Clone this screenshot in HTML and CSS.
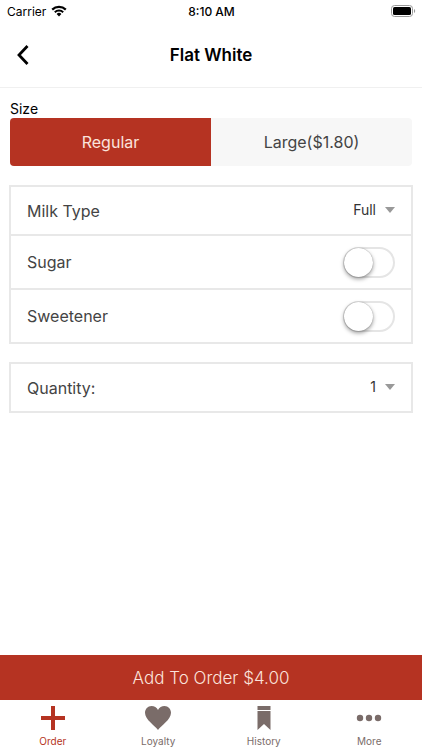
FILE: index.html
```html
<!DOCTYPE html>
<html lang="en">
<head>
  <meta charset="UTF-8">
  <meta name="viewport" content="width=device-width, initial-scale=1.0">
  <title>Flat White</title>
  <link rel="stylesheet" href="styles.css">
</head>
<body>

<div class="status-bar">
  <div class="carrier">
    <span>Carrier</span>
    <svg width="16" height="12" viewBox="0 0 16 12" aria-hidden="true">
      <path d="M1.2 4.6a9.8 9.8 0 0 1 13.6 0" fill="none" stroke="#000" stroke-width="2.2"/>
      <path d="M3.8 7.3a6.1 6.1 0 0 1 8.4 0" fill="none" stroke="#000" stroke-width="2"/>
      <path d="M8 11.4 5.6 9a3.5 3.5 0 0 1 4.8 0z"/>
    </svg>
  </div>
  <span class="time">8:10 AM</span>
  <div class="battery">
    <svg width="25" height="12" viewBox="0 0 25 12" aria-hidden="true">
      <rect x="0.5" y="0.5" width="21" height="11" rx="3" fill="#fff" stroke="#999"/>
      <rect x="2" y="2" width="18" height="8" rx="1.6"/>
      <path d="M23 4c1.6.6 1.6 3.4 0 4z" fill="#999"/>
    </svg>
  </div>
</div>

<header class="header">
  <button class="back" type="button" aria-label="Back">
    <svg width="14" height="20" viewBox="0 0 14 20" aria-hidden="true">
      <path d="M12.500 1 4 10l8.500 9" fill="none" stroke="#000" stroke-width="2.800"/>
    </svg>
  </button>
  <h1>Flat White</h1>
</header>

<main class="content">
  <fieldset class="size">
    <legend>Size</legend>
    <div class="segments">
      <label class="segment"><input type="radio" name="size" checked><span>Regular</span></label>
      <label class="segment"><input type="radio" name="size"><span>Large($1.80)</span></label>
    </div>
  </fieldset>

  <div class="card">
    <div class="row">
      <label for="milk">Milk Type</label>
      <div class="dropdown">
        <select id="milk">
          <option>Full</option>
          <option>Skim</option>
          <option>Soy</option>
        </select>
        <svg class="arrow" width="10" height="6" viewBox="0 0 10 6" aria-hidden="true"><path d="M0 0h10L5 6z"/></svg>
      </div>
    </div>
    <div class="row row-switch">
      <label for="sugar">Sugar</label>
      <input class="switch" type="checkbox" id="sugar">
    </div>
    <div class="row row-switch">
      <label for="sweetener">Sweetener</label>
      <input class="switch" type="checkbox" id="sweetener">
    </div>
  </div>

  <div class="card">
    <div class="row">
      <label for="quantity">Quantity:</label>
      <div class="dropdown">
        <select id="quantity">
          <option>1</option>
          <option>2</option>
          <option>3</option>
        </select>
        <svg class="arrow" width="10" height="6" viewBox="0 0 10 6" aria-hidden="true"><path d="M0 0h10L5 6z"/></svg>
      </div>
    </div>
  </div>
</main>

<button class="add-button" type="button">Add To Order $4.00</button>

<nav class="tabs">
  <a class="tab active" href="#order">
    <svg width="28" height="26" viewBox="0 0 28 26" aria-hidden="true">
      <path d="M12 1h4v10h10v4H16v10h-4V15H2v-4h10z"/>
    </svg>
    <span>Order</span>
  </a>
  <a class="tab" href="#loyalty">
    <svg width="28" height="26" viewBox="0 0 28 26" aria-hidden="true">
      <path d="M14 25C11 20.500 1 15 1 7.800 1 4 3.800 1 7.500 1c2.800 0 5.300 1.500 6.500 4 1.200-2.500 3.700-4 6.500-4C24.200 1 27 4 27 7.800 27 15 17 20.500 14 25z"/>
    </svg>
    <span>Loyalty</span>
  </a>
  <a class="tab" href="#history">
    <svg width="28" height="26" viewBox="0 0 28 26" aria-hidden="true">
      <path d="M7.500 1h13v4h-13zM7.500 6h13v19L14 19l-6.500 6z"/>
    </svg>
    <span>History</span>
  </a>
  <a class="tab" href="#more">
    <svg width="28" height="26" viewBox="0 0 28 26" aria-hidden="true">
      <circle cx="5" cy="13" r="3.200"/>
      <circle cx="14" cy="13" r="3.200"/>
      <circle cx="23" cy="13" r="3.200"/>
    </svg>
    <span>More</span>
  </a>
</nav>

</body>
</html>
```
FILE: styles.css
```css
* {
  box-sizing: border-box;
}

body {
  margin: 0;
  min-height: 100vh;
  display: flex;
  flex-direction: column;
  background: #fff;
  color: #444;
  font-family: Inter, "Liberation Sans", sans-serif;
  font-size: 16px;
}

button,
select {
  font: inherit;
  border: none;
  background: none;
}

/* Status bar */
.status-bar {
  display: grid;
  grid-template-columns: 1fr auto 1fr;
  align-items: center;
  height: 22px;
  padding: 0 6px 0 7px;
  color: #000;
  font-size: 12px;
}

.carrier {
  display: flex;
  align-items: center;
  gap: 5px;
}

.time {
  font-weight: 500;
}

.battery {
  display: flex;
  justify-content: flex-end;
}

/* Header */
.header {
  display: grid;
  grid-template-columns: 44px 1fr 44px;
  align-items: center;
  height: 66px;
  border-bottom: 1px solid #f0f0f0;
}

.header h1 {
  margin: 0;
  color: #000;
  font-size: 17px;
  font-weight: 600;
  text-align: center;
}

.back {
  display: flex;
  justify-content: center;
  align-items: center;
  height: 44px;
  padding: 0;
  cursor: pointer;
}

/* Options */
.content {
  flex: 1;
  display: flex;
  flex-direction: column;
  gap: 18px;
  padding: 11px 9px;
}

.size {
  min-width: 0;
  margin: 0;
  padding: 0 1px 1px;
  border: none;
}

.size legend {
  padding: 0;
  color: #000;
  font-size: 14px;
  line-height: 19px;
}

.segments {
  display: flex;
  border-radius: 4px;
  overflow: hidden;
  background: #f7f7f7;
}

.segment {
  flex: 1;
  position: relative;
  cursor: pointer;
}

.segment input {
  position: absolute;
  inset: 0;
  margin: 0;
  opacity: 0;
}

.segment span {
  display: block;
  line-height: 48px;
  text-align: center;
}

.segment input:checked + span {
  background: #b53322;
  color: #fbe3dc;
}

.card {
  border: 2px solid #e8e8e8;
}

.row {
  display: flex;
  justify-content: space-between;
  align-items: center;
  height: 47px;
  padding: 0 16px;
}

.row-switch {
  height: 54px;
  border-top: 2px solid #e8e8e8;
}

.dropdown {
  display: flex;
  align-items: center;
  gap: 9px;
  padding-bottom: 2px;
}

.dropdown select {
  appearance: none;
  width: 80px;
  padding: 0;
  color: #333;
  font-size: 14px;
  text-align-last: right;
}

.arrow {
  fill: #999;
}

.switch {
  appearance: none;
  display: flex;
  width: 52px;
  height: 31px;
  margin: 0;
  border: 2px solid #e5e5e5;
  border-radius: 16px;
  cursor: pointer;
}

.switch::before {
  content: "";
  width: 29px;
  height: 29px;
  margin: -1px;
  border-radius: 50%;
  background: #fff;
  box-shadow: 0 2px 4px rgba(0, 0, 0, 0.4), 0 0 1px rgba(0, 0, 0, 0.4);
}

.switch:checked {
  justify-content: flex-end;
  background: #b53322;
}

/* Bottom */
.add-button {
  height: 45px;
  background: #b53322;
  color: #fbe3dc;
  font-size: 17px;
  font-weight: 300;
  cursor: pointer;
}

.tabs {
  display: flex;
  height: 50px;
}

.tab {
  flex: 1;
  display: flex;
  flex-direction: column;
  align-items: center;
  gap: 3px;
  padding-top: 5px;
  color: #7a6c69;
  font-size: 10px;
  line-height: 14px;
  text-decoration: none;
}

.tab svg {
  fill: currentColor;
}

.tab.active {
  color: #b53322;
}
```
